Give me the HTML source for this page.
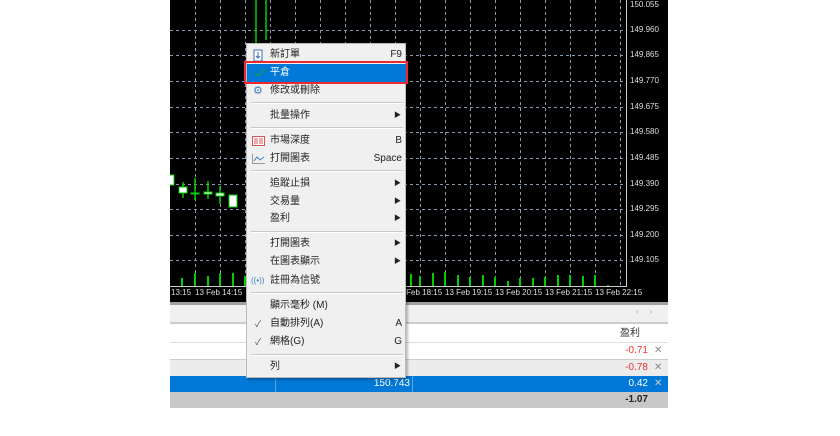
<!DOCTYPE html>
<html><head><meta charset="utf-8"><style>
body{margin:0;width:840px;height:436px;background:#fff;position:relative;overflow:hidden;font-family:"Liberation Sans","Noto Sans CJK TC",sans-serif}
.a{position:absolute}
.lbl{position:absolute;color:#ddd;font-size:8px;white-space:nowrap}
.mi{position:absolute;left:0;width:160px;height:18px;font-size:10px;color:#222;line-height:18px}
.mi .t{position:absolute;left:23px}
.mi .k{position:absolute;right:5px}
.mi .ar{position:absolute;right:6px;font-size:7px}
.sep{position:absolute;left:4px;width:152px;height:0;border-top:1px solid #c8c8c8;border-bottom:1px solid #fff}
.cell{position:absolute;font-size:10px;line-height:16px}
</style></head><body>
<div class="a" style="left:170px;top:0;width:498px;height:302px;background:#000"></div>
<svg class="a" style="left:170px;top:0" width="498" height="302">
<g stroke="#8899aa" stroke-width="1" stroke-dasharray="3,3">
<line x1="25.5" y1="0" x2="25.5" y2="286"/><line x1="50.5" y1="0" x2="50.5" y2="286"/><line x1="75.5" y1="0" x2="75.5" y2="286"/><line x1="100.5" y1="0" x2="100.5" y2="286"/><line x1="125.5" y1="0" x2="125.5" y2="286"/><line x1="150.5" y1="0" x2="150.5" y2="286"/><line x1="175.5" y1="0" x2="175.5" y2="286"/><line x1="200.5" y1="0" x2="200.5" y2="286"/><line x1="225.5" y1="0" x2="225.5" y2="286"/><line x1="250.5" y1="0" x2="250.5" y2="286"/><line x1="275.5" y1="0" x2="275.5" y2="286"/><line x1="300.5" y1="0" x2="300.5" y2="286"/><line x1="325.5" y1="0" x2="325.5" y2="286"/><line x1="350.5" y1="0" x2="350.5" y2="286"/><line x1="375.5" y1="0" x2="375.5" y2="286"/><line x1="400.5" y1="0" x2="400.5" y2="286"/><line x1="425.5" y1="0" x2="425.5" y2="286"/><line x1="450.5" y1="0" x2="450.5" y2="286"/>
<line x1="0" y1="30.5" x2="456" y2="30.5"/><line x1="0" y1="55.5" x2="456" y2="55.5"/><line x1="0" y1="81.5" x2="456" y2="81.5"/><line x1="0" y1="107.5" x2="456" y2="107.5"/><line x1="0" y1="132.5" x2="456" y2="132.5"/><line x1="0" y1="158.5" x2="456" y2="158.5"/><line x1="0" y1="184.5" x2="456" y2="184.5"/><line x1="0" y1="209.5" x2="456" y2="209.5"/><line x1="0" y1="235.5" x2="456" y2="235.5"/><line x1="0" y1="260.5" x2="456" y2="260.5"/>
</g>
<g stroke="#ccc"><line x1="456.5" y1="0" x2="456.5" y2="286"/><line x1="0" y1="286.5" x2="457" y2="286.5"/></g>
<g stroke="#0c0" stroke-width="1.5">
<line x1="86" y1="0" x2="86" y2="45"/><line x1="96" y1="0" x2="96" y2="40"/>
<line x1="13" y1="182" x2="13" y2="198"/><line x1="25" y1="178" x2="25" y2="200"/><line x1="38" y1="181" x2="38" y2="199"/><line x1="50" y1="186" x2="50" y2="204"/>
</g>
<g fill="#fff" stroke="#0c0"><rect x="-1" y="175" width="5" height="10"/><rect x="9" y="187" width="8" height="6"/><rect x="21" y="193" width="8" height="1"/><rect x="34" y="192" width="8" height="2"/><rect x="46" y="193" width="8" height="3"/><rect x="59" y="195" width="8" height="12"/></g>
<g fill="#0c0"><rect x="11" y="278" width="2" height="8"/><rect x="24" y="273" width="2" height="13"/><rect x="37" y="276" width="2" height="10"/><rect x="49" y="273" width="2" height="13"/><rect x="62" y="273" width="2" height="13"/><rect x="74" y="276" width="2" height="10"/>
<rect x="240" y="274" width="2" height="12"/><rect x="249" y="276" width="2" height="10"/><rect x="262" y="273" width="2" height="13"/><rect x="274" y="272" width="2" height="14"/><rect x="287" y="275" width="2" height="11"/><rect x="299" y="277" width="2" height="9"/><rect x="312" y="275" width="2" height="11"/><rect x="324" y="277" width="2" height="9"/><rect x="337" y="281" width="2" height="5"/><rect x="349" y="278" width="2" height="8"/><rect x="362" y="278" width="2" height="8"/><rect x="374" y="277" width="2" height="9"/><rect x="387" y="275" width="2" height="11"/><rect x="399" y="275" width="2" height="11"/><rect x="412" y="276" width="2" height="10"/><rect x="424" y="275" width="2" height="11"/><rect x="437" y="285" width="2" height="1"/></g>
</svg>
<div class="lbl" style="left:630px;top:0px">150.055</div>
<div class="lbl" style="left:630px;top:25px">149.960</div>
<div class="lbl" style="left:630px;top:50px">149.865</div>
<div class="lbl" style="left:630px;top:76px">149.770</div>
<div class="lbl" style="left:630px;top:102px">149.675</div>
<div class="lbl" style="left:630px;top:127px">149.580</div>
<div class="lbl" style="left:630px;top:153px">149.485</div>
<div class="lbl" style="left:630px;top:179px">149.390</div>
<div class="lbl" style="left:630px;top:204px">149.295</div>
<div class="lbl" style="left:630px;top:230px">149.200</div>
<div class="lbl" style="left:630px;top:255px">149.105</div>
<div class="lbl" style="left:171px;top:288px">13:15</div>
<div class="lbl" style="left:195px;top:288px">13 Feb 14:15</div>
<div class="lbl" style="left:395px;top:288px">13 Feb 18:15</div>
<div class="lbl" style="left:445px;top:288px">13 Feb 19:15</div>
<div class="lbl" style="left:495px;top:288px">13 Feb 20:15</div>
<div class="lbl" style="left:545px;top:288px">13 Feb 21:15</div>
<div class="lbl" style="left:595px;top:288px">13 Feb 22:15</div>
<!-- bottom panel -->
<div class="a" style="left:170px;top:302px;width:498px;height:3px;background:#a0a0a0"></div>
<div class="a" style="left:170px;top:305px;width:498px;height:17px;background:#f0f0f0"></div>
<div class="a" style="left:636px;top:307px;font-size:8px;color:#aaa">‹&nbsp;&nbsp;&nbsp;&nbsp;&nbsp;›</div>
<div class="a" style="left:170px;top:322px;width:498px;height:2px;background:#ccc"></div>
<div class="a" style="left:170px;top:324px;width:498px;height:35px;background:#fff"></div>
<div class="a" style="left:170px;top:342px;width:498px;height:1px;background:#ddd"></div>
<div class="a" style="left:170px;top:359px;width:498px;height:1px;background:#ccc"></div>
<div class="a" style="left:170px;top:360px;width:498px;height:16px;background:#ececec"></div>
<div class="a" style="left:170px;top:376px;width:498px;height:16px;background:#0078d7"></div>
<div class="a" style="left:275px;top:376px;width:1px;height:16px;background:#5aa5e5"></div>
<div class="a" style="left:412px;top:376px;width:1px;height:16px;background:#5aa5e5"></div>
<div class="a" style="left:170px;top:392px;width:498px;height:16px;background:#c8c8c8"></div>
<div class="cell" style="left:620px;top:326px;color:#333">盈利</div>
<div class="cell" style="right:192px;top:343px;color:#e33">-0.71</div>
<div class="cell" style="right:192px;top:360px;color:#e33">-0.78</div>
<div class="cell" style="right:192px;top:376px;color:#fff">0.42</div>
<div class="cell" style="right:192px;top:392px;color:#222;font-weight:bold">-1.07</div>
<div class="cell" style="left:654px;top:343px;color:#888">✕</div>
<div class="cell" style="left:654px;top:360px;color:#888">✕</div>
<div class="cell" style="left:654px;top:376px;color:#ccc">✕</div>
<div class="cell" style="right:430px;top:376px;color:#fff">150.743</div>
<!-- menu -->
<div class="a" style="left:246px;top:43px;width:160px;height:335px;background:#f0f0f0;border:1px solid #bbb;box-sizing:border-box;box-shadow:2px 2px 2px rgba(0,0,0,.25)">
<div class="mi" style="top:2px"><svg class="a" style="left:6px;top:3px" width="11" height="13"><rect x="1" y="1" width="8" height="11" fill="#fff" stroke="#3b6fb5"/><path d="M5 3v6M3 7l2 2 2-2" stroke="#3b6fb5" fill="none"/></svg><span class="t">新訂單</span><span class="k">F9</span></div>
<div class="mi" style="top:20px;background:#0078d7;color:#fff"><svg class="a" style="left:7px;top:4px" width="12" height="10"><path d="M1 5l3 3 7-7" stroke="#1a9a4a" stroke-width="1.3" fill="none"/></svg><span class="t">平倉</span></div>
<div class="mi" style="top:38px"><span class="a" style="left:6px;color:#3b7fc5;font-size:11px">⚙</span><span class="t">修改或刪除</span></div>
<div class="sep" style="top:58px"></div>
<div class="mi" style="top:63px"><span class="t">批量操作</span><span class="ar">▶</span></div>
<div class="sep" style="top:83px"></div>
<div class="mi" style="top:88px"><svg class="a" style="left:5px;top:4px" width="13" height="10"><rect x="0.5" y="0.5" width="12" height="9" fill="#fff" stroke="#d55"/><path d="M2 3h4M2 5h4M2 7h4M7 3h4M7 5h4M7 7h4" stroke="#d55"/></svg><span class="t">市場深度</span><span class="k">B</span></div>
<div class="mi" style="top:106px"><svg class="a" style="left:5px;top:4px" width="13" height="10"><path d="M0.5 0v9.5H13" stroke="#999" fill="none"/><path d="M2 7l3-4 3 3 4-3" stroke="#3b7fc5" fill="none"/></svg><span class="t">打開圖表</span><span class="k">Space</span></div>
<div class="sep" style="top:126px"></div>
<div class="mi" style="top:131px"><span class="t">追蹤止損</span><span class="ar">▶</span></div>
<div class="mi" style="top:149px"><span class="t">交易量</span><span class="ar">▶</span></div>
<div class="mi" style="top:166px"><span class="t">盈利</span><span class="ar">▶</span></div>
<div class="sep" style="top:187px"></div>
<div class="mi" style="top:191px"><span class="t">打開圖表</span><span class="ar">▶</span></div>
<div class="mi" style="top:209px"><span class="t">在圖表顯示</span><span class="ar">▶</span></div>
<div class="mi" style="top:228px"><span class="a" style="left:4px;color:#3b7fc5;font-size:8px">((•))</span><span class="t">註冊為信號</span></div>
<div class="sep" style="top:248px"></div>
<div class="mi" style="top:253px"><span class="t">顯示毫秒 (M)</span></div>
<div class="mi" style="top:271px"><span class="a" style="left:8px;color:#555;font-size:9px">✓</span><span class="t">自動排列(A)</span><span class="k">A</span></div>
<div class="mi" style="top:289px"><span class="a" style="left:8px;color:#555;font-size:9px">✓</span><span class="t">網格(G)</span><span class="k">G</span></div>
<div class="sep" style="top:310px"></div>
<div class="mi" style="top:314px"><span class="t">列</span><span class="ar">▶</span></div>
</div>
<div class="a" style="left:244px;top:61px;width:164px;height:23px;border:2px solid #f0282d;box-sizing:border-box"></div>
</body></html>
